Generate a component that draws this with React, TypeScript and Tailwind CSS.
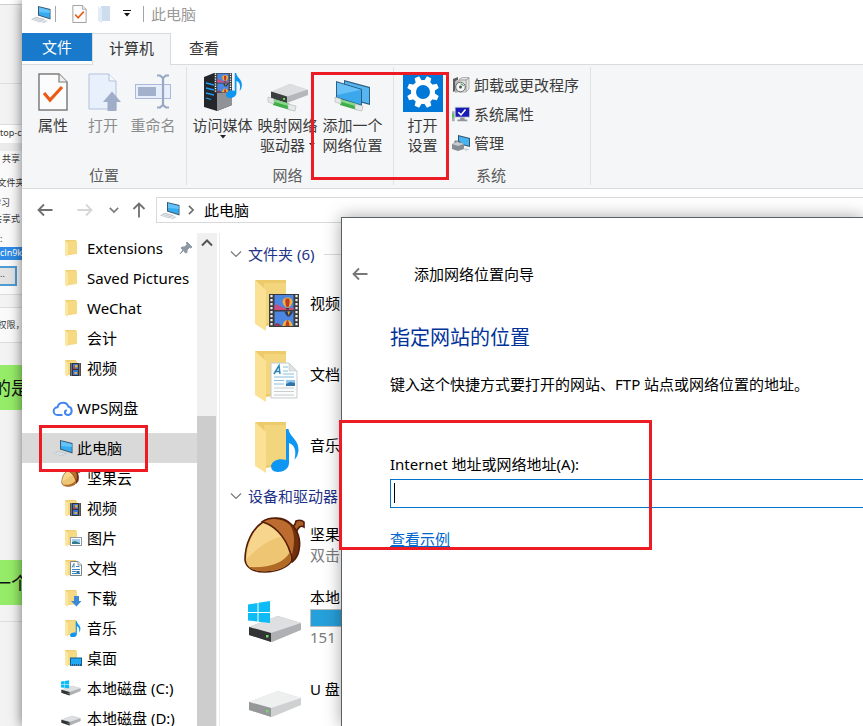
import type { ReactNode } from "react";

const FONT = "font-['Noto_Sans','Noto_Sans_CJK_SC',sans-serif]";

/* ---------- icons ---------- */

function PcIcon({ className = "h-5 w-5" }: { className?: string }) {
  return (
    <svg viewBox="0 0 20 20" className={className}>
      <path d="M7 2 L19.500 5 V15.500 L7 11.500Z" fill="#3a566b" />
      <path d="M8 3.200 L18.700 5.900 V14.200 L8 10.700Z" fill="#35abf2" />
      <path d="M8 3.200 L18.700 5.900 V9 L8 8Z" fill="#62c3fa" />
      <path d="M0 15.500 L5 12.800 L14 15.200 L9 18.200Z" fill="#bcc4cb" />
      <path d="M10 18.200 L14 16 L17 17 L13 19.200Z" fill="#d3d9dd" />
      <path d="M2 15.200 L9.500 17 M4 14.200 L11.500 16" stroke="#f4f6f8" strokeWidth=".7" />
    </svg>
  );
}

function CheckDoc({ className }: { className: string }) {
  return (
    <svg viewBox="0 0 30 38" className={className}>
      <path d="M1 1 H21 L29 9 V37 H1Z" fill="#fcfcfc" stroke="#7d7d7d" strokeWidth="1.500" />
      <path d="M21 1 V9 H29" fill="#eee" stroke="#7d7d7d" strokeWidth="1.200" />
      <path d="M6 20 L12 27 L24 14" fill="none" stroke="#ea5a16" strokeWidth="3.200" />
    </svg>
  );
}

function OpenDoc() {
  return (
    <svg viewBox="-3 0 36 40" className="h-10 w-9">
      <path d="M1 2 H21 L28 9 V37 H1Z" fill="#e8f0fb" stroke="#b3c1dc" />
      <path d="M21 2 V9 H28" fill="#f4f8fe" stroke="#b3c1dc" />
      <path d="M24 19.500 L33 30 H28.500 V39 H19.500 V30 H15Z" fill="#9fadc9" />
    </svg>
  );
}

function RenameIcon() {
  return (
    <svg viewBox="0 0 38 40" className="h-10 w-[38px]">
      <rect x="1.500" y="12.500" width="35" height="14" fill="#e7effb" stroke="#abbada" />
      <rect x="4" y="15" width="18" height="9" fill="#a3b1cc" />
      <path d="M23 3.500 H26 L29 6 L32 3.500 H35 M29 5 V33 M23 35.500 H26 L29 33 L32 35.500 H35" fill="none" stroke="#98a7c3" strokeWidth="2.200" />
    </svg>
  );
}

function Film({ x = 0, y = 0, s = 1 }: { x?: number; y?: number; s?: number }) {
  return (
    <g transform={`translate(${x} ${y}) scale(${s})`}>
      <rect width="30" height="33" fill="#3b3b3b" />
      <path d="M2.500 1 V33 M27.500 1 V33" stroke="#f2f2f2" strokeWidth="2.200" strokeDasharray="2.200 1.800" />
      <rect x="5.500" y="1" width="19" height="15" fill="#4c86e0" />
      <rect x="5.500" y="17.500" width="19" height="14.500" fill="#4c86e0" />
      <path d="M5.500 12 L8 10 L12 13 L18 14.500 L24.500 13.500 V16 H5.500Z" fill="#cf4a7d" />
      <path d="M13.500 8 A5 4.500 0 0 1 23.500 8 Q23 11 20 13.500 H17 Q14 11 13.500 8" fill="#f3b233" />
      <path d="M16.800 4.500 Q15.500 8 17.500 13 H19.500 Q21.500 8 20.200 4.500Z" fill="#c03a2c" />
      <path d="M17 14 H20 V15.500 H17Z" fill="#4a3020" />
      <path d="M15.500 17.500 H24 Q23 20.500 20.800 22.500 H18.500 Q16 20.500 15.500 17.500" fill="#2f3b56" />
      <path d="M18.500 17.500 H21 L19.800 21.500Z" fill="#e0a92c" />
      <path d="M13.500 32 Q14.500 26 18.500 26 Q22.500 26 23.500 32Z" fill="#f3b233" />
      <path d="M16.500 32 Q17 27 18.500 26 Q20 27 20.500 32Z" fill="#c03a2c" />
      <path d="M5.500 30 L9 29 L13 32 H5.500Z" fill="#8b3c55" />
    </g>
  );
}

function MusicNote({ x = 0, y = 0, s = 1 }: { x?: number; y?: number; s?: number }) {
  return (
    <g transform={`translate(${x} ${y}) scale(${s})`}>
      <path d="M15 0 H17.500 C19 9 28 10 27.500 22 Q27 27 23.500 31 C25.500 22 24 16 18 14 V34 C18 40 12 43 7 43 C2 43 0 40 0 37 C1 31 9 29 15 31Z" fill="#0d97f2" />
    </g>
  );
}

function MediaServer() {
  return (
    <svg viewBox="0 0 42 40" className="h-10 w-[42px]">
      <path d="M2 5 L12 1 L30 5 V33 L15 39 L2 35Z" fill="#23272c" />
      <path d="M15 10 L30 6 V33 L15 39Z" fill="#8f9296" />
      <path d="M4 11 L12 13 M4 16 L12 18 M4 21 L12 23 M4 26 L9 27.500" stroke="#1f9df0" strokeWidth="1.300" />
      <Film x={12} y={1} s={0.6} />
      <MusicNote x={24} y={1} s={0.58} />
    </svg>
  );
}

function Cable() {
  return (
    <>
      <path d="M6 27 L23 32 V38 L6 33Z" fill="#3fae48" />
      <path d="M6 27 L23 32 V34.500 L6 29.500Z" fill="#86d98a" />
      <path d="M1 25 L7 27 V32 L1 30Z M21 32 L29 34 L28 39 L21 37.500Z" fill="#e4e8e6" stroke="#aeb5b1" strokeWidth=".6" />
    </>
  );
}

function NetDrive() {
  return (
    <svg viewBox="0 0 42 40" className="h-10 w-[42px]">
      <path d="M4 20 L23 12 L41 18 V23 L20 31 L4 26Z" fill="#b4b6b9" />
      <path d="M4 19.500 L23 12 L41 17.500 L20 24.500Z" fill="#dddee0" />
      <path d="M4 19.500 L20 24.500 V31 L4 26Z" fill="#3c3e40" />
      <rect x="16" y="26" width="2" height="2" fill="#5be04d" />
      <Cable />
    </svg>
  );
}

function NetPlace() {
  return (
    <svg viewBox="0 0 38 40" className="h-10 w-[38px]">
      <path d="M10 8 L36 15 V33 L10 26Z" fill="#2d5e83" />
      <path d="M11 9.500 L35 16 V31.500 L11 25Z" fill="#57b5ef" />
      <path d="M2 9 L28 17 V34 L2 26Z" fill="#2d5e83" />
      <path d="M3 10.500 L27 17.800 V32.500 L3 25Z" fill="#3ba8ee" />
      <path d="M3 10.500 L27 17.800 L3 23Z" fill="#67c0f6" />
      <Cable />
    </svg>
  );
}

function GearTile() {
  const teeth = [0, 45, 90, 135, 180, 225, 270, 315];
  return (
    <svg viewBox="0 0 40 40" className="h-10 w-10">
      <rect width="40" height="40" fill="#0078d7" />
      <g fill="#fff">
        {teeth.map((a) => (
          <path key={a} d="M16.800 9 L17.600 4 H22.400 L23.200 9Z" transform={`rotate(${a + 22.5} 20 20)`} />
        ))}
      </g>
      <circle cx="20" cy="20" r="9.500" fill="none" stroke="#fff" strokeWidth="5" />
    </svg>
  );
}

function UninstallIcon() {
  return (
    <svg viewBox="0 0 18 18" className="h-[18px] w-[18px]">
      <path d="M7 3.500 L10 1.500 H17 V13 L14 16 H7Z" fill="#e4e4e4" stroke="#9a9a9a" strokeWidth=".7" />
      <path d="M14 4 V15.500 M7 4 H14 L17 2" stroke="#888" strokeWidth=".8" fill="none" />
      <path d="M1 3 L6 1 V4 L3.500 5 V15 L1 16Z" fill="#5d5d5d" />
      <path d="M3 6 L7 4 V16 L3 17Z" fill="#b5b5b5" />
      <circle cx="8.500" cy="11" r="4.800" fill="#f3f6f7" stroke="#6a6a6a" strokeWidth="1" />
      <circle cx="8.500" cy="11" r="1.500" fill="#545454" />
      <path d="M8.500 7.800 A3.500 3.500 0 0 1 11.500 10" stroke="#63a878" strokeWidth="1.300" fill="none" />
    </svg>
  );
}

function SysIcon() {
  return (
    <svg viewBox="0 0 20 18" className="h-[18px] w-5">
      <rect x="0" y="6" width="3" height="11" fill="#a5abae" />
      <rect x="0" y="9" width="2" height="4" fill="#54c847" />
      <rect x="3" y="1" width="17" height="12" fill="#c9ccd2" />
      <rect x="4" y="2" width="15" height="10" fill="#161cb4" />
      <path d="M7 7 L10 10 L15 4" stroke="#fff" strokeWidth="1.800" fill="none" />
      <path d="M9 13 H14 V15 H17 V17 H6 V15 H9Z" fill="#91969c" />
    </svg>
  );
}

function ManageIcon() {
  return (
    <svg viewBox="0 0 18 18" className="h-[18px] w-[18px]">
      <path d="M6 1 L18 4 V13 L6 10Z" fill="#2c536e" />
      <path d="M7 2.300 L17 4.800 V11.700 L7 9.300Z" fill="#48b3f1" />
      <path d="M0 10 L6 8 L12 10 V15 L6 17 L0 15Z" fill="#868d92" />
      <path d="M0 10 L6 8 L12 10 L6 12Z" fill="#c6cbce" />
      <path d="M3 9 V7 L8 7.500 V9" stroke="#5f666a" fill="none" />
      <path d="M11 15 L14 14 L18 15.500 L14 17Z" fill="#d4d7d9" />
    </svg>
  );
}

function FolderShape() {
  return (
    <>
      <path d="M1 1 H32 V44 L12 47 L1 41Z" fill="#edcb6b" />
      <path d="M10 4 H32 V44 H12Z" fill="#f3d57d" />
      <path d="M1 1 L12 11 V52 L1 45Z" fill="#fbe194" />
    </>
  );
}

type Kind = "plain" | "video" | "picture" | "doc" | "download" | "music" | "desktop";

function SmallFolder({ kind }: { kind: Kind }) {
  return (
    <svg viewBox="0 0 18 18" className="h-[18px] w-[18px] shrink-0">
      <path d="M1 1 H12 V15 L5 16 L1 15Z" fill="#efd070" />
      <path d="M4 2 H13 V15 H4Z" fill="#f6da83" />
      <path d="M1 1 L4 4 V18 L1 16Z" fill="#fbe6a2" />
      {kind === "video" && (
        <g>
          <rect x="6" y="4" width="11" height="13" fill="#333" />
          <path d="M7.200 4.500 V17 M15.800 4.500 V17" stroke="#e8e8e8" strokeDasharray="1 1" />
          <path d="M9 5 H14 V10 H9Z M9 11 H14 V16 H9Z" fill="#3d78d8" />
          <path d="M11 6 H13.500 V8.500 H11Z M10.500 13 H13 V15 H10.500Z" fill="#efb02e" />
          <path d="M9 8.500 H12 V10 H9Z" fill="#b8434a" />
        </g>
      )}
      {kind === "picture" && (
        <g>
          <rect x="6.500" y="8.500" width="11" height="8" fill="#fff" stroke="#91989e" />
          <rect x="8" y="10" width="8" height="5" fill="#a4d0ee" />
          <path d="M8 15 V13 L11 12 L16 14 V15Z" fill="#357b8e" />
        </g>
      )}
      {kind === "doc" && (
        <g>
          <path d="M6.500 2.500 H14 L17.500 6 V16.500 H6.500Z" fill="#fff" stroke="#7d8388" />
          <path d="M14 2.500 V6 H17.500" fill="#e6e9eb" stroke="#7d8388" strokeWidth=".8" />
          <path d="M8 8.500 L10 4.500 V8.500 M12 7.500 H15.500 M8 10.500 H16 M8 12.500 H12 M8 14.500 H16" stroke="#3786bd" fill="none" />
          <rect x="12.500" y="12" width="3" height="2" fill="#2a6f9f" />
        </g>
      )}
      {kind === "download" && <path d="M10 7 H15 V12 H17.500 L12.500 17.500 L7 12 H10Z" fill="#3c8ad3" />}
      {kind === "music" && <MusicNote x={6} y={2} s={0.38} />}
      {kind === "desktop" && (
        <g>
          <rect x="6" y="8.500" width="12" height="8.500" fill="#135d8f" />
          <rect x="7" y="9.500" width="10" height="5.500" fill="#20a9f5" />
          <path d="M7 16 H17" stroke="#7cc7ef" strokeDasharray="1 1" />
        </g>
      )}
    </svg>
  );
}

function BigFolder({ kind }: { kind: "video" | "doc" | "music" }) {
  return (
    <svg viewBox="0 0 48 54" className="h-[54px] w-12 shrink-0">
      <FolderShape />
      {kind === "video" && <Film x={15} y={15} />}
      {kind === "doc" && (
        <g>
          <path d="M17 13 H35 L43 21 V48 H17Z" fill="#fbfcfc" stroke="#c7cbcd" />
          <path d="M35 13 V21 H43Z" fill="#dde2e4" stroke="#c7cbcd" strokeWidth=".6" />
          <path d="M20 24 L25 15.500 L26 24 M21.500 21.500 H26" fill="none" stroke="#2b86b5" strokeWidth="1.500" />
          <path d="M29 17 H34 M29 21 H34 M29 24 H40 M20 27 H40 M20 30.500 H30 M20 34 H30" stroke="#8ac0de" />
          <path d="M20 38 H40 M20 41.500 H40 M20 45 H40" stroke="#c9ced1" />
          <rect x="32" y="30" width="9" height="6" fill="#2f75a8" />
          <path d="M32 30 H41 V33 L36 32 L32 34Z" fill="#8ec6e8" />
        </g>
      )}
      {kind === "music" && <MusicNote x={17} y={8} />}
    </svg>
  );
}

function Acorn({ className }: { className: string }) {
  return (
    <svg viewBox="0 0 62 58" className={className}>
      <path d="M46 12 Q51 11 52 5 Q57 3 60 6 V11 Q55 8 52 17Z" fill="#a95f24" stroke="#541c08" strokeWidth="1.600" />
      <path d="M18 6 C26 0 40 1 47 8 C54 14 57 24 55 34 C54 40 52 43 48 46Z" fill="#6f300d" stroke="#541c08" strokeWidth="1.600" />
      <path d="M19 6 C27 1 39 2 46 9 C51 17 51 26 48 39 C43 25 33 12 19 6Z" fill="#bd6c30" />
      <path d="M19 6 C34 11 45 26 48 44 C45 51 33 56 21 56 C10 56 2 52 1 44 C1 28 8 13 19 6Z" fill="#edc573" stroke="#541c08" strokeWidth="1.600" />
      <path d="M19 7.500 C27 10 33 15 37 21 C25 23 12 33 3 43 C3 29 9 14 19 7.500Z" fill="#fbd995" opacity=".75" />
      <path d="M46 36 C40 47 26 52 5 51 C10 55 16 55.300 21 55.300 C33 55.300 44 51 47 44Z" fill="#b06a25" />
    </svg>
  );
}

function Drive({ windows = false, pale = false, className }: { windows?: boolean; pale?: boolean; className: string }) {
  return (
    <svg viewBox="0 0 54 42" className={className}>
      <path d="M1 26 L30 15 L53 22 V29 L24 41 L1 34Z" fill={pale ? "#cfd0d1" : "#aeb0b3"} />
      <path d="M1 26 L30 15 L53 22 L23 32Z" fill={pale ? "#eeefef" : "#dedfe1"} />
      <path d="M1 26 L23 32 V41 L1 34Z" fill={pale ? "#969798" : "#313335"} />
      <rect x="18" y="34" width="2.500" height="2.500" fill="#6fd96a" />
      {windows && (
        <path d="M0 3.500 L9.500 2 V11 H0Z M10.500 1.800 L22 0 V11 H10.500Z M0 12 H9.500 V20.500 L0 19.500Z M10.500 12 H22 V22 L10.500 20.700Z" fill="#0dbbf5" />
      )}
    </svg>
  );
}

function Cloud() {
  return (
    <svg viewBox="0 0 22 18" className="h-[18px] w-[22px] shrink-0" fill="none" stroke="#4285f0" strokeWidth="2">
      <path d="M10.500 16 H5.500 A3.800 3.800 0 0 1 5.500 8.300 A5.600 5.600 0 0 1 16.300 7.500 A4.400 4.400 0 0 1 16.500 16 C12 16 12 11 15 11.500" />
    </svg>
  );
}

function Arrow({ className = "", turn = 0 }: { className?: string; turn?: number }) {
  return (
    <svg viewBox="0 0 16 16" className={`h-4 w-4 ${className}`} fill="none" stroke="currentColor" strokeWidth="1.800">
      <path d="M15.500 8 H1.500 M7 2.500 L1.500 8 L7 13.500" transform={`rotate(${turn} 8 8)`} />
    </svg>
  );
}

function Chevron({ className, turn = 0, weight = 1.5 }: { className: string; turn?: number; weight?: number }) {
  return (
    <svg viewBox="0 0 12 12" className={className} fill="none" stroke="currentColor" strokeWidth={weight}>
      <path d="M1 3.500 L6 8.500 L11 3.500" transform={`rotate(${turn} 6 6)`} />
    </svg>
  );
}

/* ---------- ribbon ---------- */

function RibbonButton({ icon, lines, className, dim = false, drop }: { icon: ReactNode; lines: string[]; className: string; dim?: boolean; drop?: "below" | "inline" }) {
  return (
    <button className={`flex flex-col items-center ${className} ${dim ? "text-[#8d8d8d]" : "text-[#3b3b3b]"}`}>
      <span className="mb-[3px] flex h-10 items-center">{icon}</span>
      {lines.map((line, i) => (
        <span key={line} className="flex items-center whitespace-nowrap">
          {line}
          {drop === "inline" && i === lines.length - 1 && <Caret className="ml-1" />}
        </span>
      ))}
      {drop === "below" && <Caret />}
    </button>
  );
}

function Caret({ className = "" }: { className?: string }) {
  return (
    <svg viewBox="0 0 6 4" className={`h-1 w-1.5 ${className}`}>
      <path d="M0 0 H6 L3 3.500Z" fill="#222" />
    </svg>
  );
}

function RibbonGroup({ label, className, children }: { label: string; className: string; children: ReactNode }) {
  return (
    <section className={`flex flex-col justify-between border-r border-[#dfe1e3] ${className}`}>
      <div className="flex pt-[5px]">{children}</div>
      <div className="text-center text-[#5c5c5c]">{label}</div>
    </section>
  );
}

function Ribbon() {
  return (
    <div className="flex h-[124px] shrink-0 border-b border-[#d9dbdc] bg-[#f5f6f7] pt-[2px] pb-[3px]">
      <RibbonGroup label="位置" className="w-[165px] px-1.5">
        <RibbonButton icon={<CheckDoc className="h-[38px] w-[30px]" />} lines={["属性"]} className="w-[50px]" />
        <RibbonButton icon={<OpenDoc />} lines={["打开"]} dim className="w-[50px]" />
        <RibbonButton icon={<RenameIcon />} lines={["重命名"]} dim className="w-[50px]" />
      </RibbonGroup>
      <RibbonGroup label="网络" className="w-[207px] pr-2 pl-[3px]">
        <RibbonButton icon={<MediaServer />} lines={["访问媒体"]} drop="below" className="w-[65px]" />
        <RibbonButton icon={<NetDrive />} lines={["映射网络", "驱动器"]} drop="inline" className="w-[65px]" />
        <RibbonButton icon={<NetPlace />} lines={["添加一个", "网络位置"]} className="w-[65px]" />
      </RibbonGroup>
      <RibbonGroup label="系统" className="w-[197px] pr-2 pl-1.5">
        <RibbonButton icon={<GearTile />} lines={["打开", "设置"]} className="w-[45px]" />
        <div className="ml-[7px] flex flex-col gap-[9px] pt-[3px] text-[#3b3b3b]">
          <button className="flex items-center gap-1 whitespace-nowrap">
            <span className="flex w-[18px] justify-center"><UninstallIcon /></span>卸载或更改程序
          </button>
          <button className="flex items-center gap-1 whitespace-nowrap">
            <span className="flex w-[18px] justify-center"><SysIcon /></span>系统属性
          </button>
          <button className="flex items-center gap-1 whitespace-nowrap">
            <span className="flex w-[18px] justify-center"><ManageIcon /></span>管理
          </button>
        </div>
      </RibbonGroup>
    </div>
  );
}

/* ---------- explorer ---------- */

function TreeItem({ icon, text, deep = true, selected = false, pin = false }: { icon: ReactNode; text: string; deep?: boolean; selected?: boolean; pin?: boolean }) {
  return (
    <button className={`flex h-[30px] w-full shrink-0 items-center text-left whitespace-nowrap text-black ${deep ? "pl-[37px]" : "pl-[27px]"} ${selected ? "bg-[#d9d9d9]" : ""}`}>
      <span className="flex w-7 shrink-0 items-center justify-center">{icon}</span>
      {text}
      {pin && (
        <svg viewBox="0 0 14 14" className="ml-4 h-3.5 w-3.5">
          <path d="M8 1 L13 6 L11.500 7 L10.500 6.500 L8 9 L8 11.500 L6.500 12 L4.500 9.500 L1 13 L4 9 L2 7 L3 6 L5.500 6 L8 3.500 L7.500 2Z" fill="#8c98a3" stroke="#8c98a3" />
        </svg>
      )}
    </button>
  );
}

function Sidebar() {
  return (
    <nav className="flex w-[175px] shrink-0 flex-col overflow-hidden">
      <TreeItem icon={<SmallFolder kind="plain" />} text="Extensions" pin />
      <TreeItem icon={<SmallFolder kind="plain" />} text="Saved Pictures" />
      <TreeItem icon={<SmallFolder kind="plain" />} text="WeChat" />
      <TreeItem icon={<SmallFolder kind="plain" />} text="会计" />
      <TreeItem icon={<SmallFolder kind="video" />} text="视频" />
      <div className="h-2.5 shrink-0" />
      <TreeItem deep={false} icon={<Cloud />} text="WPS网盘" />
      <div className="h-2.5 shrink-0" />
      <TreeItem deep={false} selected icon={<PcIcon />} text="此电脑" />
      <TreeItem icon={<span className="pr-1"><Acorn className="h-[18px] w-5" /></span>} text="坚果云" />
      <TreeItem icon={<SmallFolder kind="video" />} text="视频" />
      <TreeItem icon={<SmallFolder kind="picture" />} text="图片" />
      <TreeItem icon={<SmallFolder kind="doc" />} text="文档" />
      <TreeItem icon={<SmallFolder kind="download" />} text="下载" />
      <TreeItem icon={<SmallFolder kind="music" />} text="音乐" />
      <TreeItem icon={<SmallFolder kind="desktop" />} text="桌面" />
      <TreeItem icon={<span className="pr-1"><Drive windows className="h-4 w-5" /></span>} text="本地磁盘 (C:)" />
      <TreeItem icon={<span className="pr-1"><Drive className="h-4 w-5" /></span>} text="本地磁盘 (D:)" />
    </nav>
  );
}

function SectionTitle({ text }: { text: string }) {
  return (
    <h2 className="flex h-5 items-center gap-1.5 whitespace-nowrap text-[#1e3287]">
      <Chevron className="h-3 w-3 text-[#7a7a7a]" weight={1.2} />
      {text}
      <span className="ml-1 h-px flex-1 bg-[#dcdcdc]" />
    </h2>
  );
}

function FolderTile({ kind, text }: { kind: "video" | "doc" | "music"; text: string }) {
  return (
    <div className="flex h-[71px] items-center pl-6">
      <BigFolder kind={kind} />
      <span className="ml-2 pb-1.5 text-black">{text}</span>
    </div>
  );
}

function Files() {
  return (
    <main className="min-w-0 flex-1 overflow-hidden border-l border-[#ececec] pt-[11px] pl-2.5">
      <SectionTitle text="文件夹 (6)" />
      <div className="pt-1.5 pb-[3px]">
        <FolderTile kind="video" text="视频" />
        <FolderTile kind="doc" text="文档" />
        <FolderTile kind="music" text="音乐" />
      </div>
      <SectionTitle text="设备和驱动器" />
      <div className="flex h-[77px] items-center pl-3.5">
        <Acorn className="h-[60px] w-[62px]" />
        <div className="ml-1 leading-[21px] text-black">
          <div>坚果</div>
          <div className="text-[#7b7b7b]">双击</div>
        </div>
      </div>
      <div className="flex h-[77px] items-center pl-[18px]">
        <Drive windows className="h-[42px] w-[54px]" />
        <div className="ml-2 flex-1 pb-2.5 text-black">
          <div>本地</div>
          <div className="mt-0.5 h-[18px] w-[200px] border border-[#bcbcbc] bg-[#26a0da]" />
          <div className="text-[#7b7b7b]">151</div>
        </div>
      </div>
      <div className="flex h-[74px] items-center pl-[18px]">
        <Drive pale className="h-[42px] w-[54px]" />
        <div className="ml-2 pb-4 text-black">U 盘</div>
      </div>
    </main>
  );
}

function Explorer() {
  return (
    <div className="absolute inset-y-0 right-0 left-[22px] flex flex-col overflow-hidden bg-white shadow-[0_0_12px_rgba(0,0,0,0.55)]">
      <header className="flex h-[33px] shrink-0 items-center pb-1.5 pl-[9px] text-[#999]">
        <PcIcon />
        <span className="ml-1 h-4 w-px bg-[#a5a5a5]" />
        <CheckDoc className="ml-4 h-[18px] w-[15px]" />
        <svg viewBox="0 0 13 18" className="ml-[11px] h-[18px] w-[13px]">
          <path d="M3 1 H12 V16 H3Z" fill="#cddcee" />
          <path d="M0 1 L4 4 V18 L0 16Z" fill="#e2ecf7" />
        </svg>
        <svg viewBox="0 0 8 7" className="ml-3 h-[7px] w-2">
          <path d="M0 .5 H8" stroke="#111" />
          <path d="M1 3 H7 L4 6.500Z" fill="#111" />
        </svg>
        <span className="ml-3 h-4 w-px bg-[#a5a5a5]" />
        <span className="ml-[7px]">此电脑</span>
      </header>

      <div role="tablist" className="flex h-8 shrink-0 border-b border-[#dadbdc]">
        <button role="tab" className="mb-[3px] w-[70px] bg-[#1979ca] text-white">文件</button>
        <button role="tab" className="-mb-px w-[79px] border-x border-t border-[#dadbdc] bg-[#f5f6f7] pb-1 text-[#333]">计算机</button>
        <button role="tab" className="w-[66px] pb-0.5 text-[#333]">查看</button>
      </div>

      <Ribbon />

      <div className="flex h-11 shrink-0 items-center pb-0.5">
        <button aria-label="后退" className="ml-[15px] text-[#6f6f6f]"><Arrow /></button>
        <button aria-label="前进" className="ml-6 text-[#d6d6d6]"><Arrow turn={180} /></button>
        <button aria-label="历史" className="ml-4 text-[#7c7c7c]"><Chevron className="h-2.5 w-2.5" weight={2} /></button>
        <button aria-label="上移" className="ml-3 text-[#6f6f6f]"><Arrow turn={90} /></button>
        <div className="ml-[9px] flex h-[26px] flex-1 items-center border border-r-0 border-[#d9d9d9] pl-[3px] text-black">
          <PcIcon />
          <Chevron className="ml-1.5 h-2.5 w-2.5 text-[#6d6d6d]" turn={-90} weight={2} />
          <span className="ml-2">此电脑</span>
        </div>
      </div>

      <div className="flex min-h-0 flex-1">
        <Sidebar />
        <div className="mr-[2px] flex w-5 shrink-0 flex-col items-center bg-[#f0f0f0]">
          <Chevron className="mt-1 h-3 w-3 text-[#555]" turn={180} weight={2} />
          <div className="mt-[167px] mr-px w-[19px] flex-1 bg-[#cdcdcd]" />
        </div>
        <Files />
      </div>
    </div>
  );
}

/* ---------- page behind the window ---------- */

function Backdrop() {
  return (
    <div className="flex h-full w-[22px] flex-col overflow-hidden bg-[#f3f3f3] text-[9px] leading-4 whitespace-nowrap text-[#333]">
      <div className="h-[5px] shrink-0 border-b border-[#d0d0d0] bg-white" />
      <div className="h-[79px] shrink-0 border-b border-[#dedede]" />
      <div className="h-[41px] shrink-0 border-b border-[#dedede]" />
      <div className="h-[18px] shrink-0 bg-white">top-c</div>
      <div className="h-2 shrink-0 bg-[#ebebeb]" />
      <div className="flex h-[143px] shrink-0 flex-col bg-[#fafafa]">
        <div className="mb-2 pl-0.5">共享</div>
        <div className="flex justify-center"><span>文件夹</span></div>
        <div className="mt-1 flex w-2.5 justify-end"><span>学习</span></div>
        <div className="flex w-5 justify-end"><span>共享式</span></div>
        <div className="mt-1">:</div>
        <div className="h-[13px] bg-[#2f8ce6] leading-[12px] text-white">cln9k</div>
        <div className="mt-1.5 h-5 w-[17px] border-2 border-l-0 border-[#4f9bd5] bg-[#e3e3e3] leading-3">..</div>
      </div>
      <div className="h-3.5 shrink-0 border-y border-[#dcdcdc]" />
      <div className="flex h-[35px] shrink-0 items-center justify-center border-b border-[#dcdcdc] bg-[#fafafa]"><span>权限，</span></div>
      <div className="h-[22px] shrink-0" />
      <div className="flex h-[45px] shrink-0 items-center justify-center bg-[#95ec69] text-lg text-[#111]"><span>的是</span></div>
      <div className="h-[150px] shrink-0" />
      <div className="flex h-[45px] shrink-0 items-center justify-center bg-[#95ec69] text-lg text-[#111]"><span>一个</span></div>
      <div className="h-[17px] shrink-0 border-b border-[#dedede]" />
    </div>
  );
}

/* ---------- wizard ---------- */

function Wizard() {
  return (
    <div role="dialog" aria-labelledby="wizard-title" className="absolute top-[217px] right-0 bottom-0 left-[341px] border-t border-l border-[#5a5f63] bg-white pt-[46px] text-black shadow-[0_0_16px_rgba(0,0,0,0.35)]">
      <div className="flex h-5 items-center pl-2.5">
        <button aria-label="上一步" className="text-[#777]"><Arrow /></button>
        <span id="wizard-title" className="ml-[46px]">添加网络位置向导</span>
      </div>
      <div className="pl-12">
        <h1 className="mt-[39px] text-xl leading-[30px] text-[#003399]">指定网站的位置</h1>
        <p className="mt-[21px] whitespace-nowrap">键入这个快捷方式要打开的网站、FTP 站点或网络位置的地址。</p>
        <label htmlFor="address" className="mt-[60px] block">Internet 地址或网络地址(A):</label>
        <div className="relative mt-[5px]">
          <input id="address" type="text" className="block h-[29px] w-full border border-r-0 border-[#0073cf] bg-white px-1 outline-none" />
          <span className="absolute top-1 left-1 h-5 w-px bg-black" />
        </div>
        <a href="#example" className="mt-[21px] inline-block text-[#0066cc] underline">查看示例</a>
      </div>
    </div>
  );
}

export default function App() {
  return (
    <div className={`relative h-screen w-full overflow-hidden bg-[#f3f3f3] text-[15px] leading-5 ${FONT}`}>
      <Backdrop />
      <Explorer />
      <Wizard />
      <div className="pointer-events-none absolute top-[72px] left-[311px] h-[108px] w-[138px] border-3 border-[#ed1c24]" />
      <div className="pointer-events-none absolute top-[425px] left-[39px] h-[47px] w-[109px] border-3 border-[#ed1c24]" />
      <div className="pointer-events-none absolute top-[420px] left-[339px] h-[130px] w-[313px] border-3 border-[#ed1c24]" />
    </div>
  );
}
